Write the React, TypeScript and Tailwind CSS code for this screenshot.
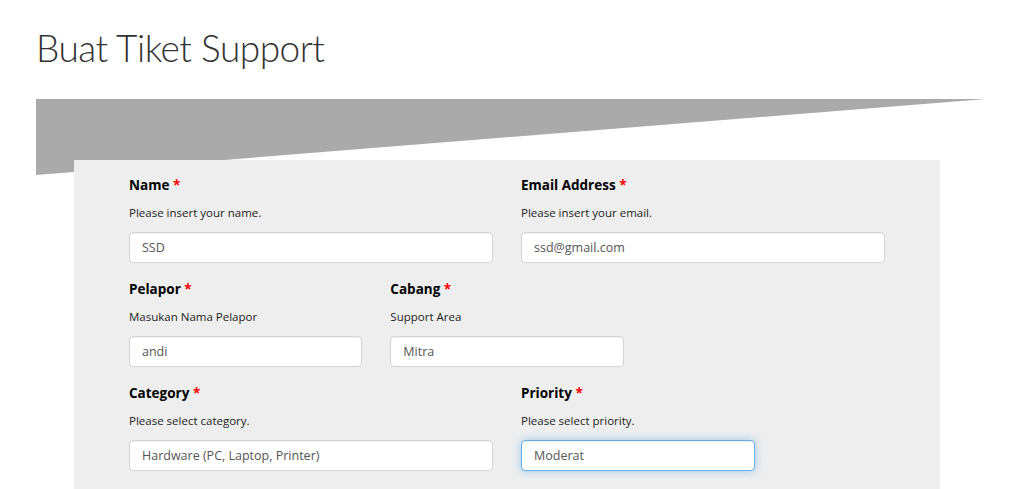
import React from "react";

const font = { fontFamily: '"Open Sans", "Noto Sans", sans-serif' };

function Field({
  label,
  hint,
  value,
  width,
  focused = false,
}: {
  label: string;
  hint: string;
  value: string;
  width?: string;
  focused?: boolean;
}) {
  return (
    <div className="flex flex-col">
      <label className="text-[13.5px] font-bold leading-5 text-black">
        {label} <span className="text-[#ff0000]">*</span>
      </label>
      <p className="mt-[9px] text-[11.5px] leading-[17px] text-[#222]">{hint}</p>
      <input
        readOnly
        defaultValue={value}
        className={`mt-[11px] h-[31px] rounded-[4px] border bg-white px-3 text-[12.5px] text-[#555] outline-none ${
          width ?? "w-full"
        } ${
          focused
            ? "border-[#66afe9] shadow-[inset_0_1px_1px_rgba(0,0,0,0.075),0_0_8px_rgba(102,175,233,0.6)]"
            : "border-[#d4d4d4] shadow-[inset_0_1px_1px_rgba(0,0,0,0.05)]"
        }`}
      />
    </div>
  );
}

export default function App() {
  return (
    <div className="min-h-screen bg-white" style={font}>
      <h1 className="pl-[36px] pt-[22px] font-['Lato',sans-serif] text-[37px] font-light leading-[52px] tracking-[-0.5px] text-[#333]">
        Buat Tiket Support
      </h1>

      <div className="pl-[36px] pt-[25px]">
        {/* slanted banner behind the form card */}
        <svg width="950" height="76" viewBox="0 0 950 76" className="block">
          <polygon points="0,0 950,0 0,76" fill="#aaaaaa" />
        </svg>

        <div className="relative ml-[38px] mt-[-15px] w-[866px] bg-[#eeeeee] px-[55px] pb-[24px] pt-[15px]">
          <div className="grid grid-cols-2 gap-x-[28px]">
            <Field label="Name" hint="Please insert your name." value="SSD" />
            <Field label="Email Address" hint="Please insert your email." value="ssd@gmail.com" />
          </div>

          <div className="mt-[16px] grid grid-cols-3 gap-x-[28px]">
            <Field label="Pelapor" hint="Masukan Nama Pelapor" value="andi" />
            <Field label="Cabang" hint="Support Area" value="Mitra" />
          </div>

          <div className="mt-[16px] grid grid-cols-2 gap-x-[28px]">
            <Field label="Category" hint="Please select category." value="Hardware (PC, Laptop, Printer)" />
            <Field
              label="Priority"
              hint="Please select priority."
              value="Moderat"
              width="w-[234px]"
              focused
            />
          </div>
        </div>
      </div>
    </div>
  );
}
